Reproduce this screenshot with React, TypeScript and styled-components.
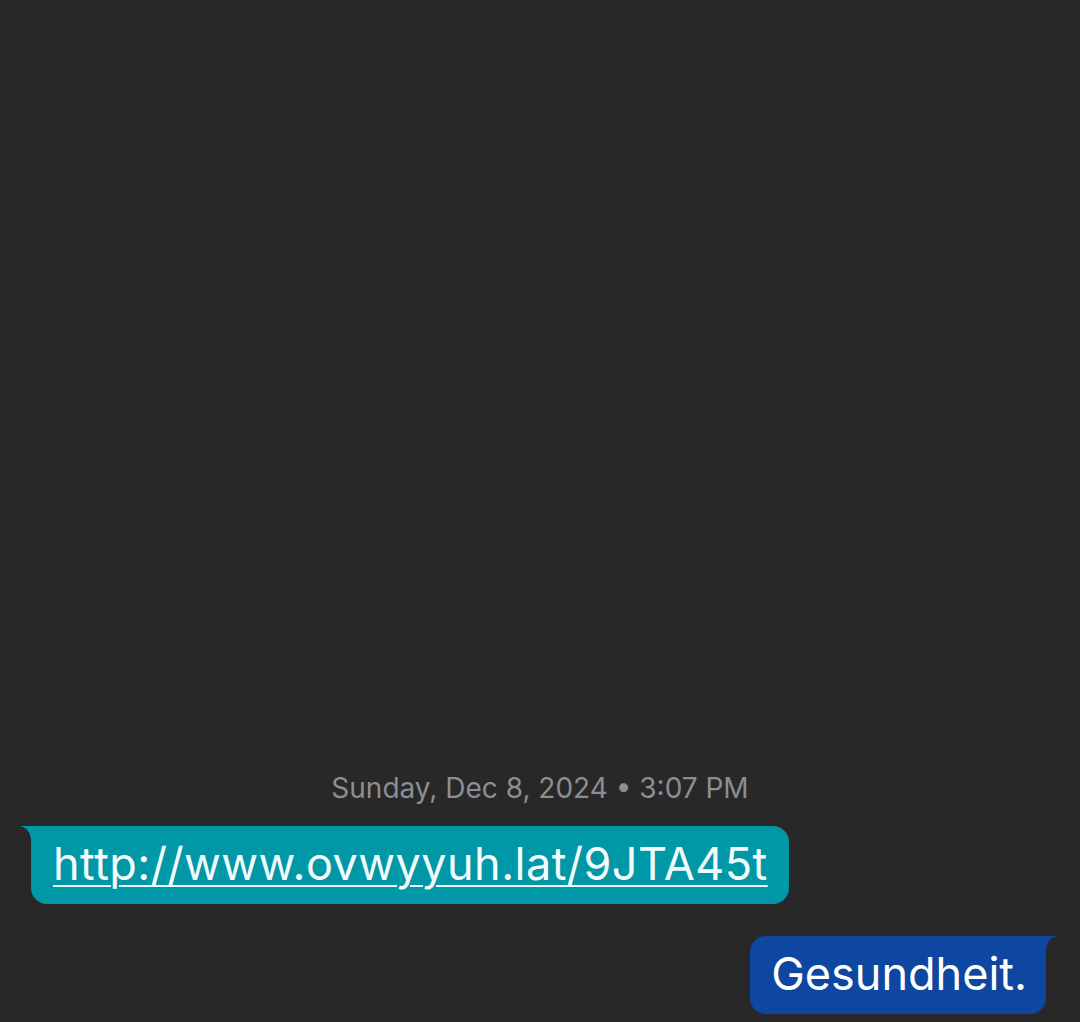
import React from "react";
import styled, { createGlobalStyle } from "styled-components";

const Global = createGlobalStyle`
  html, body { margin: 0; padding: 0; background: #282828; }
  body { font-family: "Inter", "Noto Sans", sans-serif; }
`;

const Screen = styled.div`
  height: 1022px;
  width: 1080px;
  box-sizing: border-box;
  display: flex;
  flex-direction: column;
  justify-content: flex-end;
  padding: 0 34px 8px 31px;
  background: #282828;
  overflow: hidden;
`;

const Stamp = styled.div`
  align-self: center;
  margin-left: 3px;
  font-size: 28px;
  line-height: 34px;
  color: #8b8e93;
  margin-bottom: 21px;
`;

const Bubble = styled.div<{ $out?: boolean }>`
  position: relative;
  align-self: ${(p) => (p.$out ? "flex-end" : "flex-start")};
  background: ${(p) => (p.$out ? "#0d47a1" : "#0097a7")};
  color: #ffffff;
  height: 78px;
  box-sizing: border-box;
  display: flex;
  align-items: center;
  padding: 0 ${(p) => (p.$out ? "19px" : "21px")} 2px
    ${(p) => (p.$out ? "21px" : "22px")};
  border-radius: ${(p) => (p.$out ? "16px 0 16px 16px" : "0 16px 16px 16px")};
  font-size: 45px;
  line-height: 52px;
  margin-top: ${(p) => (p.$out ? "32px" : "0")};

  &::before {
    content: "";
    position: absolute;
    top: 0;
    width: 12px;
    height: 14px;
    ${(p) =>
      p.$out
        ? `right: -12px; background: radial-gradient(ellipse 12px 14px at 100% 100%, transparent 97%, #0d47a1 100%);`
        : `left: -12px; background: radial-gradient(ellipse 12px 14px at 0 100%, transparent 97%, #0097a7 100%);`}
  }
`;

const Link = styled.span`
  letter-spacing: 0.45px;
  text-decoration: underline;
  text-decoration-thickness: 2px;
  text-underline-offset: 5px;
  color: #f2fbfc;
`;

export default function App() {
  return (
    <>
      <Global />
      <Screen>
        <Stamp>Sunday, Dec 8, 2024 • 3:07 PM</Stamp>
        <Bubble>
          <Link>http://www.ovwyyuh.lat/9JTA45t</Link>
        </Bubble>
        <Bubble $out>Gesundheit.</Bubble>
      </Screen>
    </>
  );
}
